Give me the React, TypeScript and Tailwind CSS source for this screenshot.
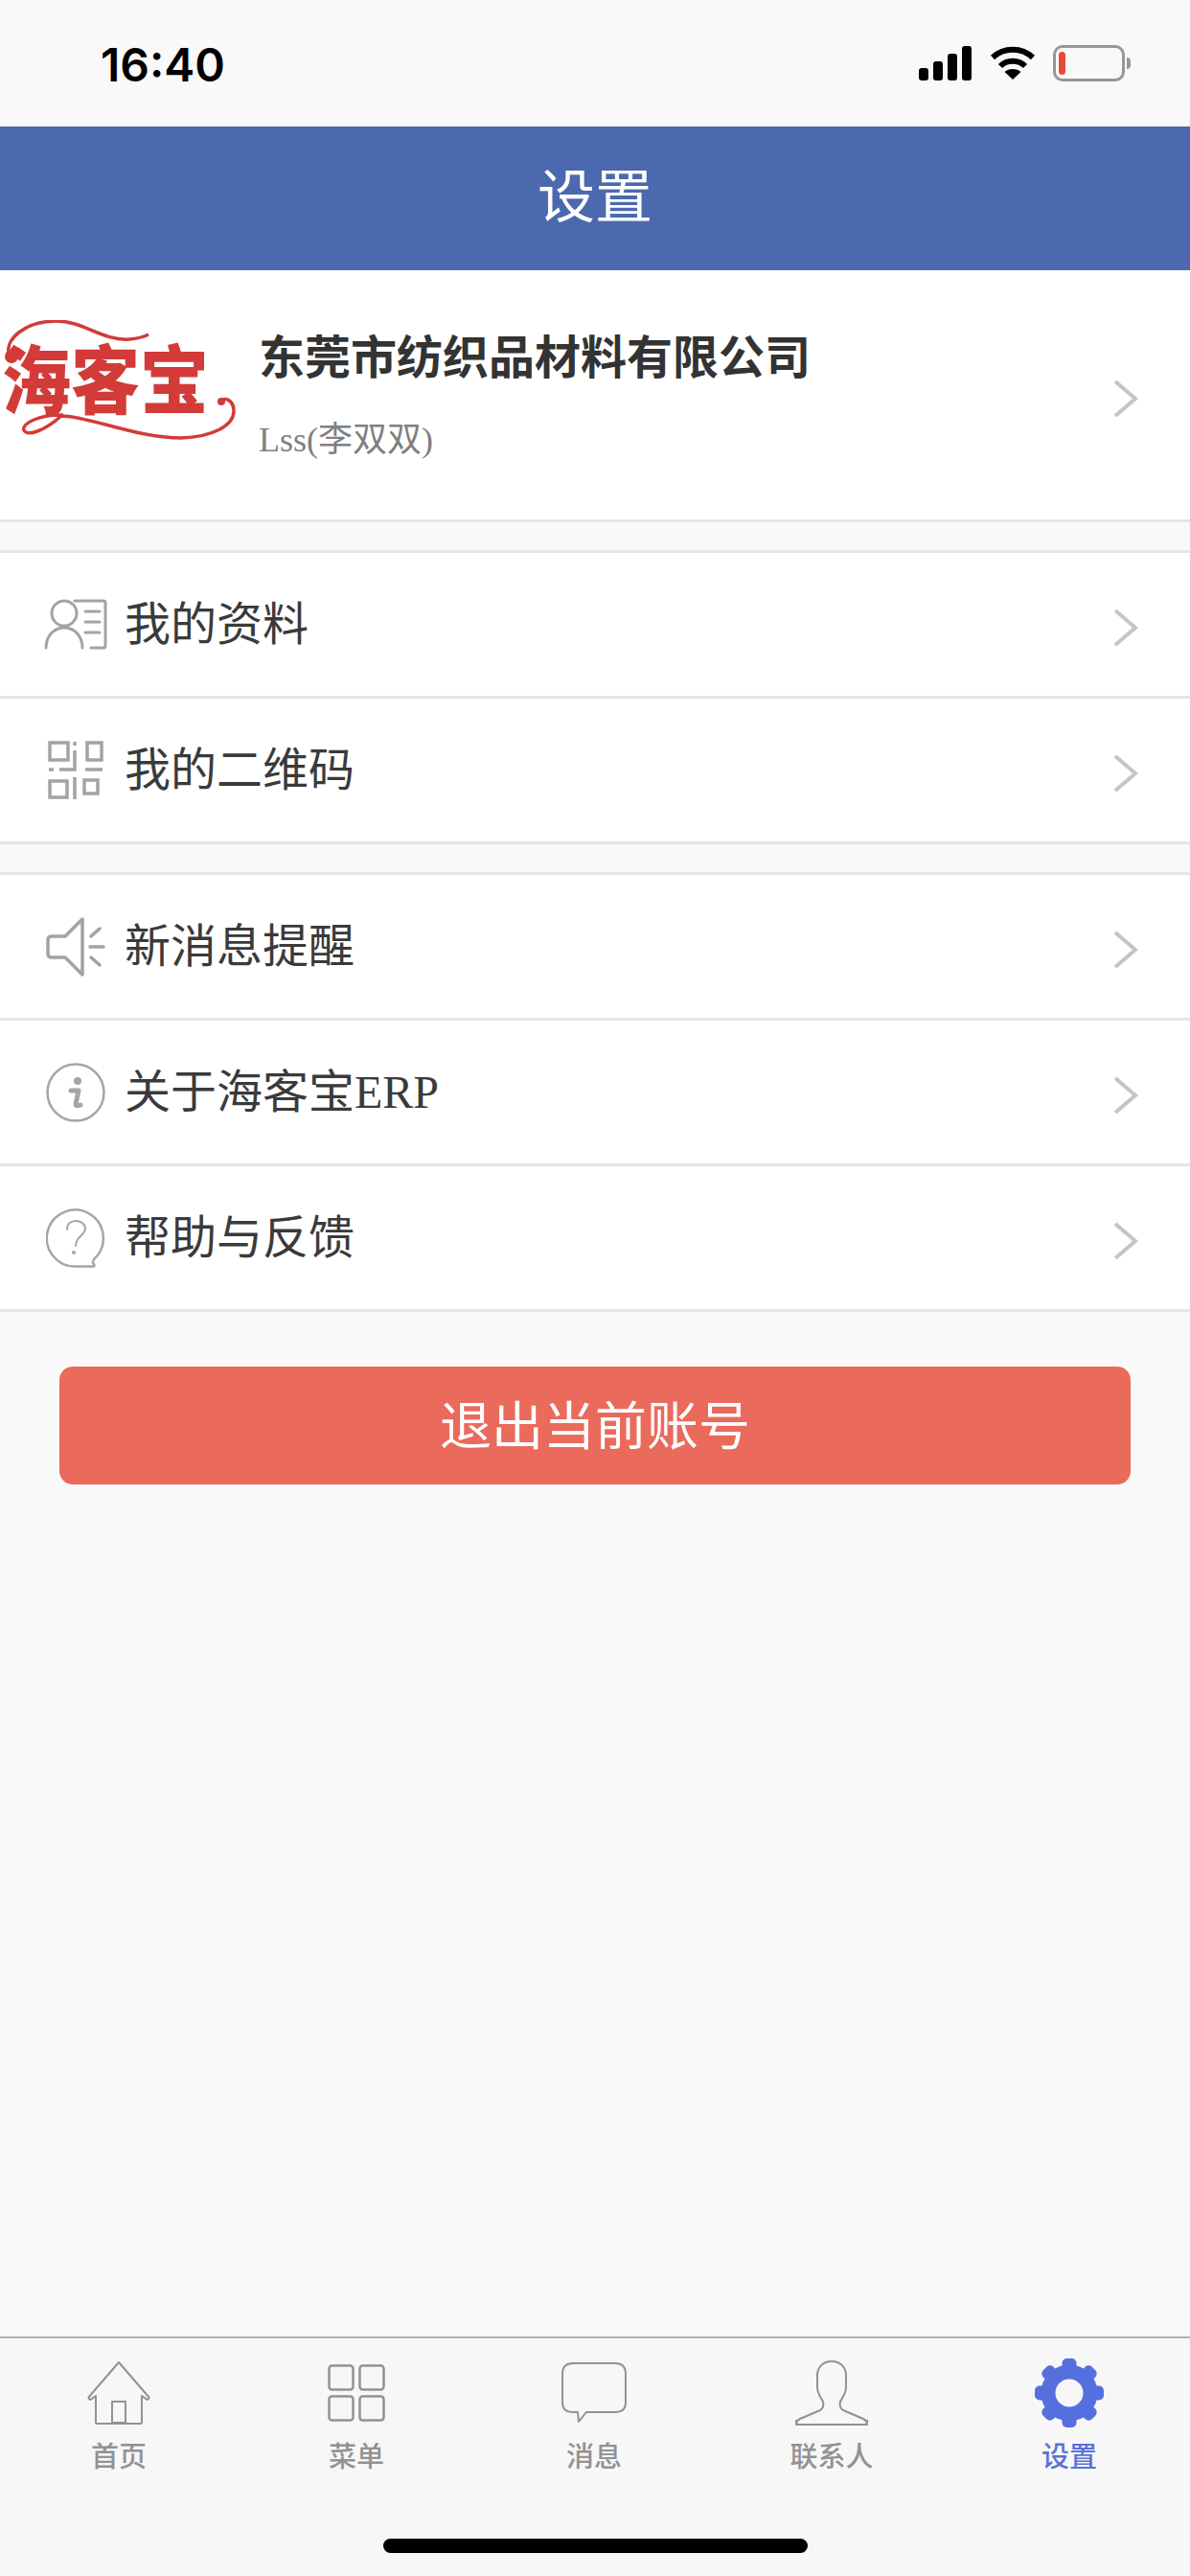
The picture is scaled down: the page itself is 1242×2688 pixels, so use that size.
const CN = "font-['Liberation_Serif','Noto_Sans_CJK_SC',serif]";

function Chevron() {
  return (
    <svg width="28" height="42" viewBox="0 0 28 42" fill="none" className="mt-[7px] shrink-0">
      <path d="M3 3l21 18L3 39" stroke="#c5c5c7" strokeWidth="4" />
    </svg>
  );
}

function ProfileIcon() {
  return (
    <svg width="66" height="54" viewBox="0 0 66 54" fill="none" stroke="#a3a3a3" strokeWidth="3" strokeLinecap="round">
      <circle cx="21" cy="15" r="13" />
      <path d="M2 51c0-12 8-21 19-21s19 9 19 21" />
      <path d="M32 2h30q2 0 2 2v45q0 2-2 2H49M43 13h15M43 24h15M43 35h15" />
    </svg>
  );
}

function QrIcon() {
  return (
    <svg width="58" height="61" viewBox="0 0 58 61" fill="none" stroke="#a3a3a3" strokeWidth="3.5">
      <rect x="2" y="2" width="19" height="18" />
      <rect x="41" y="2" width="15" height="18" />
      <rect x="2" y="42" width="18" height="17" />
      <rect x="38" y="41" width="14" height="14" />
      <path d="M28 1v4M28 10v20H12M1 30h5M39 30h18M28 38v23" />
    </svg>
  );
}

function SpeakerIcon() {
  return (
    <svg width="62" height="62" viewBox="0 0 62 62" fill="none" stroke="#a3a3a3" strokeWidth="3.5" strokeLinecap="round" strokeLinejoin="round">
      <path d="M38 2v58L20 42H6q-4 0-4-4V24q0-4 4-4h14z" />
      <path d="M47 20l9-8M46 31h14M47 42l9 8" />
    </svg>
  );
}

function InfoIcon() {
  return (
    <svg width="62" height="62" viewBox="0 0 62 62" fill="none">
      <circle cx="31" cy="31" r="29.5" stroke="#a6a6a6" strokeWidth="2.5" />
      <circle cx="33" cy="19" r="4" fill="#a6a6a6" />
      <path d="M26 29h8l-3 14q0 3 5 1" stroke="#a6a6a6" strokeWidth="5" strokeLinecap="round" strokeLinejoin="round" />
    </svg>
  );
}

function HelpIcon() {
  return (
    <svg width="62" height="62" viewBox="0 0 62 62" fill="none" stroke="#a6a6a6" strokeWidth="2.5" strokeLinecap="round" strokeLinejoin="round">
      <path d="M50 53A29.5 29.5 0 1 0 31 60.5L50 60.5q1-.5 0-2q-2-2 0-5.500z" />
      <path d="M22 22c0-6 4-9 9-9s10 3 10 8c0 7-10 8-10 18" strokeWidth="2" />
      <circle cx="29" cy="46" r="1" strokeWidth="2" />
    </svg>
  );
}

function HomeIcon() {
  return (
    <svg width="66" height="66" viewBox="0 0 66 66" fill="none" stroke="#929292" strokeWidth="2" strokeLinejoin="round">
      <path d="M33 1L1.500 37.500q0 2 2 2.500L9 36v28q0 1 1 1h46q1 0 1-1V36l5.500 4q2-.5 2-2.500z" />
      <rect x="26" y="42" width="14" height="22" />
    </svg>
  );
}

function GridIcon() {
  return (
    <svg width="60" height="60" viewBox="0 0 60 60" fill="none" stroke="#929292" strokeWidth="2.500">
      <rect x="1.500" y="1.500" width="25" height="25" rx="3" />
      <rect x="33.500" y="1.500" width="25" height="25" rx="3" />
      <rect x="1.500" y="33.500" width="25" height="25" rx="3" />
      <rect x="33.500" y="33.500" width="25" height="25" rx="3" />
    </svg>
  );
}

function MessageIcon() {
  return (
    <svg width="68" height="64" viewBox="0 0 68 64" fill="none" stroke="#929292" strokeWidth="2" strokeLinejoin="round">
      <path d="M12 1h44q11 0 11 11v30q0 10-11 10H26L18 62l-1-10h-5Q1 52 1 42V12Q1 1 12 1z" />
    </svg>
  );
}

function ContactIcon() {
  return (
    <svg width="76" height="68" viewBox="0 0 76 68" fill="none" stroke="#929292" strokeWidth="2" strokeLinejoin="round">
      <path d="M38 1c-9 0-15 6-15 15v12c0 6 3 10 6 15 1 4 0 7-3 9L5 61q-4 2-4 6h74q0-4-4-6L50 52c-3-2-4-5-3-9 3-5 6-9 6-15V16C53 7 47 1 38 1z" />
      <path d="M1 62v3q0 2 2 2h70q2 0 2-2v-3" />
    </svg>
  );
}

function GearIcon() {
  return (
    <svg width="72" height="72" viewBox="0 0 72 72" fill="none">
      <circle cx="36" cy="36" r="22" stroke="#5570de" strokeWidth="15" />
      {[0, 45, 90, 135, 180, 225, 270, 315].map((deg) => (
        <rect key={deg} x="28.500" y="0" width="15" height="18" rx="5" fill="#5570de" transform={`rotate(${deg} 36 36)`} />
      ))}
    </svg>
  );
}

function Logo() {
  return (
    <svg width="244" height="128" viewBox="0 0 244 128" fill="none" className="mb-[28px] shrink-0">
      <path d="M8 38C1 20 25 1 57 1C85 1 105 22 133 20Q145 19 153 15" stroke="#d23b37" strokeWidth="3.500" />
      <circle cx="10" cy="38" r="7" fill="#d23b37" />
      <text x="0" y="92" fontSize="78" fontWeight="900" fill="#d23b37" textLength="216" lengthAdjust="spacingAndGlyphs" fontFamily="'Noto Sans CJK SC', sans-serif">海客宝</text>
      <path d="M64 99C40 98 20 108 23 115C27 122 45 115 62 100C90 100 140 123 187 123C220 122 242 110 242 95C242 85 235 80 228 84" stroke="#d23b37" strokeWidth="3.500" />
      <circle cx="229" cy="85" r="4" fill="#d23b37" />
    </svg>
  );
}

function StatusIcons() {
  return (
    <div className="flex items-center">
      <svg width="56" height="36" viewBox="0 0 56 36" fill="#000">
        <rect x="0" y="23" width="10" height="13" rx="3" />
        <rect x="15" y="16" width="10" height="20" rx="3" />
        <rect x="30" y="8" width="10" height="28" rx="3" />
        <rect x="45" y="0" width="10" height="36" rx="3" />
      </svg>
      <svg width="48" height="36" viewBox="0 0 48 36" fill="none" stroke="#000" strokeWidth="6" className="ml-[18px]">
        <path d="M3 12C15 1 33 1 45 12" />
        <path d="M11 21C18 14 30 14 37 21" />
        <path d="M24 35L15.500 27C20 23 28 23 32.500 27z" fill="#000" stroke="none" />
      </svg>
      <div className="ml-[18px] flex items-center">
        <div className="flex h-[38px] w-[75px] items-center rounded-[10px] border-[3px] border-[#969696] px-[3px]">
          <div className="h-[24px] w-[7px] rounded-full bg-[#e64c3c]" />
        </div>
        <div className="ml-[2px] h-[12px] w-[4px] rounded-r-full bg-[#969696]" />
      </div>
    </div>
  );
}

function Row({ icon, label }: { icon: React.ReactNode; label: string }) {
  return (
    <div className="flex h-[152px] items-center border-b-[3px] border-[#e5e5e5] bg-white pr-[53px]">
      <div className="flex w-[130px] shrink-0 justify-center pl-[28px]">{icon}</div>
      <span className="flex-1 text-[48px] leading-none text-[#3a3a3a]">{label}</span>
      <Chevron />
    </div>
  );
}

function Tab({ icon, label, active }: { icon: React.ReactNode; label: string; active?: boolean }) {
  return (
    <div className="flex w-[248px] flex-col items-center">
      <div className="flex h-[72px] items-center justify-center">{icon}</div>
      <span className={active ? "mt-[10px] text-[29px] font-medium leading-[36px] text-[#5a72d8]" : "mt-[10px] text-[29px] font-medium leading-[36px] text-[#929292]"}>{label}</span>
    </div>
  );
}

export default function App() {
  return (
    <div className={`${CN} flex h-[2688px] w-[1242px] flex-col bg-[#f9f9f9]`}>
      {/* status bar */}
      <div className="flex h-[132px] items-center justify-between pl-[105px] pr-[62px]">
        <span className="pt-[3px] font-['Inter',sans-serif] text-[48px] font-semibold leading-none text-black">16:40</span>
        <StatusIcons />
      </div>

      <div className="flex h-[150px] items-center justify-center bg-[#4c69af]">
        <span className="text-[60px] leading-none text-white">设置</span>
      </div>

      {/* account */}
      <div className="flex h-[263px] items-center border-b-[3px] border-[#e5e5e5] bg-white pl-[2px] pr-[53px]">
        <Logo />
        <div className="ml-[24px] flex-1 pt-[3px]">
          <div className="text-[48px] font-bold leading-none text-[#333]">东莞市纺织品材料有限公司</div>
          <div className="mt-[43px] text-[36px] leading-none text-[#808080]">Lss(李双双)</div>
        </div>
        <Chevron />
      </div>

      <div className="mt-[29px] border-t-[3px] border-[#e5e5e5]">
        <Row icon={<ProfileIcon />} label="我的资料" />
        <Row icon={<QrIcon />} label="我的二维码" />
      </div>

      <div className="mt-[29px] border-t-[3px] border-[#e5e5e5]">
        <Row icon={<SpeakerIcon />} label="新消息提醒" />
        <Row icon={<InfoIcon />} label="关于海客宝ERP" />
        <Row icon={<HelpIcon />} label="帮助与反馈" />
      </div>

      <button className="mx-[62px] mt-[57px] h-[123px] rounded-[14px] bg-[#ea6a5c] pt-[5px] text-[54px] text-white">退出当前账号</button>

      {/* tab bar */}
      <div className="mt-auto h-[250px] border-t-2 border-[#b2b2b2] bg-[#f7f7f7] font-['Noto_Sans_CJK_SC',sans-serif]">
        <div className="flex pt-[21px]">
          <Tab icon={<HomeIcon />} label="首页" />
          <Tab icon={<GridIcon />} label="菜单" />
          <Tab icon={<MessageIcon />} label="消息" />
          <Tab icon={<ContactIcon />} label="联系人" />
          <Tab icon={<GearIcon />} label="设置" active />
        </div>
        <div className="mx-auto mt-[70px] h-[15px] w-[443px] rounded-full bg-black" />
      </div>
    </div>
  );
}
